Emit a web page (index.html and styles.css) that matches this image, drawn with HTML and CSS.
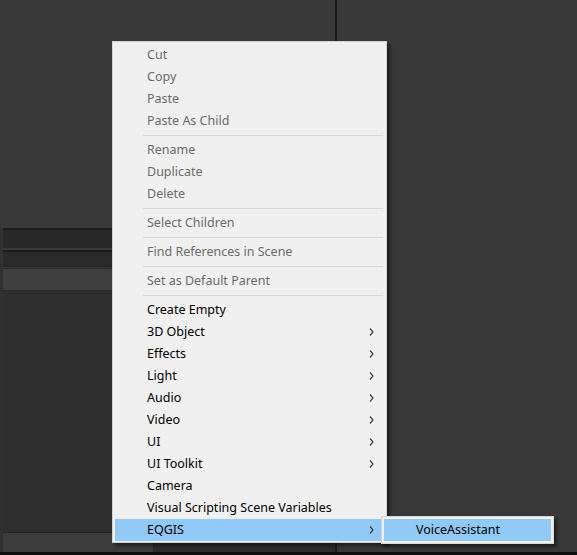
FILE: index.html
```html
<!DOCTYPE html>
<html>
<head>
<meta charset="utf-8">
<link rel="stylesheet" href="styles.css">
</head>
<body>
<div class="screen">
  <div class="main">
    <div class="left-pane">
      <div class="top-space"></div>
      <div class="panel">
        <div class="panel-edge"></div>
        <div class="panel-body">
          <div class="ln ln-a"></div>
          <div class="strip strip-1"></div>
          <div class="ln ln-b"></div>
          <div class="ln ln-c"></div>
          <div class="strip strip-2"></div>
          <div class="ln ln-d"></div>
          <div class="ln ln-e"></div>
          <div class="ln ln-f"></div>
          <div class="strip strip-3"></div>
          <div class="ln ln-f"></div>
          <div class="panel-fill"></div>
          <div class="ln ln-g"></div>
          <div class="bottom-band">
            <div class="band-light"></div>
            <div class="band-dark"><span class="thumb"></span></div>
          </div>
        </div>
      </div>
    </div>
    <div class="divider"></div>
    <div class="right-pane"></div>
  </div>
  <div class="black-bar"></div>

  <div class="menu">
    <div class="item disabled">Cut</div>
    <div class="item disabled">Copy</div>
    <div class="item disabled">Paste</div>
    <div class="item disabled">Paste As Child</div>
    <div class="sep"></div>
    <div class="item disabled">Rename</div>
    <div class="item disabled">Duplicate</div>
    <div class="item disabled">Delete</div>
    <div class="sep"></div>
    <div class="item disabled">Select Children</div>
    <div class="sep"></div>
    <div class="item disabled">Find References in Scene</div>
    <div class="sep"></div>
    <div class="item disabled">Set as Default Parent</div>
    <div class="sep"></div>
    <div class="item">Create Empty</div>
    <div class="item sub">3D Object<svg class="chev" width="5" height="8" viewBox="0 0 5 8"><path d="M1 0.5 L4 4 L1 7.5" fill="none" stroke="#3c3c3c" stroke-width="1.2"/></svg></div>
    <div class="item sub">Effects<svg class="chev" width="5" height="8" viewBox="0 0 5 8"><path d="M1 0.5 L4 4 L1 7.5" fill="none" stroke="#3c3c3c" stroke-width="1.2"/></svg></div>
    <div class="item sub">Light<svg class="chev" width="5" height="8" viewBox="0 0 5 8"><path d="M1 0.5 L4 4 L1 7.5" fill="none" stroke="#3c3c3c" stroke-width="1.2"/></svg></div>
    <div class="item sub">Audio<svg class="chev" width="5" height="8" viewBox="0 0 5 8"><path d="M1 0.5 L4 4 L1 7.5" fill="none" stroke="#3c3c3c" stroke-width="1.2"/></svg></div>
    <div class="item sub">Video<svg class="chev" width="5" height="8" viewBox="0 0 5 8"><path d="M1 0.5 L4 4 L1 7.5" fill="none" stroke="#3c3c3c" stroke-width="1.2"/></svg></div>
    <div class="item sub">UI<svg class="chev" width="5" height="8" viewBox="0 0 5 8"><path d="M1 0.5 L4 4 L1 7.5" fill="none" stroke="#3c3c3c" stroke-width="1.2"/></svg></div>
    <div class="item sub">UI Toolkit<svg class="chev" width="5" height="8" viewBox="0 0 5 8"><path d="M1 0.5 L4 4 L1 7.5" fill="none" stroke="#3c3c3c" stroke-width="1.2"/></svg></div>
    <div class="item">Camera</div>
    <div class="item">Visual Scripting Scene Variables</div>
    <div class="item sub active">EQGIS<svg class="chev" width="5" height="8" viewBox="0 0 5 8"><path d="M1 0.5 L4 4 L1 7.5" fill="none" stroke="#3c3c3c" stroke-width="1.2"/></svg></div>
  </div>

  <div class="submenu">
    <div class="item active">VoiceAssistant</div>
  </div>
</div>
</body>
</html>
```

FILE: styles.css
```css
* { box-sizing: border-box; }
html, body { margin: 0; padding: 0; background: #383838; }
body { width: 577px; height: 555px; overflow: hidden; }

.screen {
  position: relative;
  width: 577px;
  height: 555px;
  display: flex;
  flex-direction: column;
  background: #383838;
  font-family: "Noto Sans", "Open Sans", sans-serif;
}

.main { display: flex; flex: 1; }
.left-pane { width: 335px; display: flex; flex-direction: column; }
.top-space { height: 228px; background: #383838; }
.panel { flex: 1; display: flex; }
.panel-edge { width: 3px; background: #313131; }
.panel-body { flex: 1; display: flex; flex-direction: column; }

.ln { height: 1px; }
.ln-a { height: 2px; background: #1d1d1d; }
.strip-1 { height: 18px; background: #282828; }
.ln-b { height: 2px; background: #3a3a3a; }
.ln-c { height: 2px; background: #1a1a1a; }
.strip-2 { height: 14px; background: #2a2a2a; }
.ln-d { background: #222222; }
.ln-e { background: #383838; }
.ln-f { background: #2a2a2a; }
.strip-3 { height: 21px; background: #3f3f3f; }
.panel-fill { flex: 1; background: #2e2e2e; }
.ln-g { background: #262626; }
.bottom-band { height: 19px; display: flex; }
.band-light { width: 150px; background: #3c3c3c; }
.band-dark { flex: 1; background: #2c2c2c; padding-left: 114px; }
.thumb {
  display: block;
  width: 9px;
  height: 4px;
  background: #6a6a6a;
  border-radius: 0 0 5px 5px;
}

.divider { width: 2px; background: #1c1c1c; }
.right-pane { flex: 1; background: #383838; }
.black-bar { height: 3px; background: #0e0e0e; }

.menu {
  position: absolute;
  left: 112px;
  top: 41px;
  width: 275px;
  padding: 2px 1px 1px 2px;
  background: #f0f0f0;
  border: 1px solid #d2d2d2;
  box-shadow: 3px 3px 3px rgba(0, 0, 0, 0.45);
  display: flex;
  flex-direction: column;
}

.item {
  height: 22px;
  display: flex;
  align-items: center;
  justify-content: space-between;
  padding: 0 11px 2px 32px;
  font-size: 12.5px;
  color: #000000;
  white-space: nowrap;
}
.item.disabled { color: #6b6b6b; }
.item.active { background: #91c9f7; }
.chev { display: block; margin-top: 2px; }

.sep {
  height: 7px;
  display: flex;
  align-items: center;
  padding: 0 2px 0 28px;
}
.sep::before {
  content: "";
  display: block;
  width: 100%;
  height: 1px;
  background: #d7d7d7;
}

.submenu {
  position: absolute;
  left: 381px;
  top: 516px;
  width: 173px;
  height: 28px;
  padding: 2px;
  background: #f0f0f0;
  border: 1px solid #d6d6d6;
  box-shadow: 3px 3px 3px rgba(0, 0, 0, 0.45);
}
.submenu .item { padding-left: 32px; }
```
